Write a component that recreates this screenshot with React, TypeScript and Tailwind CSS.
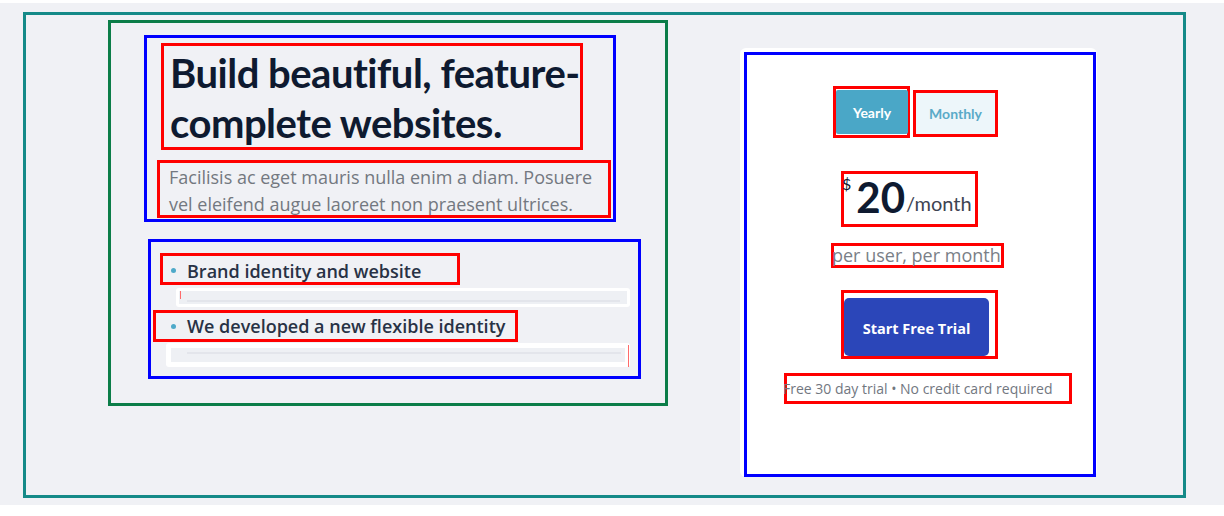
import React from "react";

const sans = { fontFamily: '"Open Sans", "Noto Sans", sans-serif' };
const head = { fontFamily: 'Lato, "Open Sans", sans-serif' };

function Bar({ variant }: { variant: 1 | 2 }) {
  if (variant === 1) {
    return (
      <div className="ml-[25px] mt-[3px] w-[454px] h-[19px] bg-white rounded-[3px] p-[3px] flex">
        <div className="relative flex-1 bg-[#eef0f4] flex items-end pb-[2px] pl-[8px] pr-[7px]">
          <div className="absolute left-[1px] top-0 h-[8px] w-[1px] bg-[#ff6b6b]" />
          <div className="h-[2px] w-full bg-[#e3e5eb]" />
        </div>
      </div>
    );
  }
  return (
    <div className="relative ml-[15px] mt-[1px] w-[464px] h-[24px] bg-white rounded-[3px] px-[5px] py-[5px] flex">
      <div className="absolute right-[1px] top-[2px] h-[22px] w-[1px] bg-[#ff6b6b]" />
      <div className="flex-1 bg-[#eef0f4] pt-[4px] pl-[16px] pr-[4px]">
        <div className="h-[2px] w-full bg-[#e3e5eb]" />
      </div>
    </div>
  );
}

export default function App() {
  return (
    <div className="w-[1224px] h-[516px] bg-white overflow-hidden">
      <div className="mt-[3px] h-[502px] bg-[#f0f1f5] pt-[9px] pl-[23px]">
        {/* teal outer */}
        <div className="w-[1163px] h-[486px] border-[3px] border-[#158a88] flex items-start">
          {/* green */}
          <div className="ml-[82px] mt-[5px] w-[560px] h-[386px] border-[3px] border-[#0b7d48] flex flex-col">
            {/* blue 1 */}
            <div className="ml-[33px] mt-[12px] w-[472px] h-[187px] border-[3px] border-[#0000ff] flex flex-col">
              <div className="ml-[14px] mt-[5px] w-[422px] h-[107px] border-[3px] border-[#ff0000] pl-[6px] pt-[2px]">
                <h1
                  style={head}
                  className="text-[40px] leading-[50px] font-bold text-[#0e1a30] tracking-[-0.5px] whitespace-nowrap"
                >
                  Build beautiful, feature-
                  <br />
                  complete websites.
                </h1>
              </div>
              <div className="ml-[10px] mt-[10px] w-[454px] h-[58px] border-[3px] border-[#ff0000] pl-[9px] pt-[1px]">
                <p style={sans} className="text-[18px] leading-[27px] text-[#737880] whitespace-nowrap">
                  Facilisis ac eget mauris nulla enim a diam. Posuere
                  <br />
                  vel eleifend augue laoreet non praesent ultrices.
                </p>
              </div>
            </div>
            {/* blue 2 */}
            <div className="ml-[37px] mt-[17px] w-[493px] h-[140px] border-[3px] border-[#0000ff] flex flex-col">
              <div className="ml-[9px] mt-[11px] w-[300px] h-[32px] border-[3px] border-[#ff0000] flex items-center pl-[8px] pt-[3px]">
                <span className="w-[5px] h-[5px] rounded-full bg-[#4ea9c9]" />
                <span style={sans} className="ml-[11px] text-[18px] leading-[22px] font-semibold text-[#283245] whitespace-nowrap">
                  Brand identity and website
                </span>
              </div>
              <Bar variant={1} />
              <div className="ml-[2px] mt-[3px] w-[365px] h-[32px] border-[3px] border-[#ff0000] flex items-center pl-[15px]">
                <span className="w-[5px] h-[5px] rounded-full bg-[#4ea9c9]" />
                <span style={sans} className="ml-[11px] text-[18px] leading-[22px] font-semibold text-[#283245] whitespace-nowrap">
                  We developed a new flexible identity
                </span>
              </div>
              <Bar variant={2} />
            </div>
          </div>
          {/* card */}
          <div className="ml-[72px] mt-[33px] w-[357px] h-[429px] bg-white rounded-[6px]">
            <div className="ml-[4px] mt-[4px] w-[352px] h-[425px] border-[3px] border-[#0000ff] flex flex-col">
              <div className="mt-[31px] ml-[86px] flex items-start gap-[3px]">
                <div className="w-[77px] h-[52px] border-[3px] border-[#ff0000] pt-[1px]">
                  <button
                    style={head}
                    className="w-[72px] h-[44px] bg-[#4aa7c7] rounded-[2px] text-white text-[14px] font-bold"
                  >
                    Yearly
                  </button>
                </div>
                <div className="mt-[4px] w-[85px] h-[47px] border-[3px] border-[#ff0000]">
                  <button
                    style={head}
                    className="w-full h-full bg-[#edf6fa] text-[#5aaac8] text-[14px] font-bold"
                  >
                    Monthly
                  </button>
                </div>
              </div>
              <div className="ml-[94px] mt-[33px] w-[137px] h-[56px] border-[3px] border-[#ff0000] flex items-start pt-[2px]">
                <span style={head} className="-ml-[2px] mt-[0px] text-[16px] leading-none text-[#0e1a30]">
                  $
                </span>
                <span style={head} className="ml-[5px] text-[42px] leading-[42px] font-bold text-[#0e1a30]">
                  20
                </span>
                <span style={head} className="ml-[1px] mt-[17px] text-[20px] leading-[20px] text-[#3d4452]">
                  /month
                </span>
              </div>
              <div className="ml-[84px] mt-[16px] w-[173px] h-[25px] border-[3px] border-[#ff0000]">
                <div style={sans} className="-ml-[2px] -mt-[2px] text-[18px] leading-[22px] text-[#7a7f87] whitespace-nowrap">
                  per user, per month
                </div>
              </div>
              <div className="ml-[94px] mt-[22px] w-[157px] h-[69px] border-[3px] border-[#ff0000] pt-[5px]">
                <button
                  style={sans}
                  className="w-[145px] h-[58px] bg-[#2b46b9] rounded-[5px] pt-[3px] text-white text-[14.5px] font-bold"
                >
                  Start Free Trial
                </button>
              </div>
              <div className="ml-[37px] mt-[14px] w-[288px] h-[31px] border-[3px] border-[#ff0000] overflow-visible">
                <div style={sans} className="-ml-[4px] mt-[3px] text-[14px] leading-[19px] text-[#72777f] whitespace-nowrap">
                  Free 30 day trial • No credit card required
                </div>
              </div>
            </div>
          </div>
        </div>
      </div>
    </div>
  );
}
